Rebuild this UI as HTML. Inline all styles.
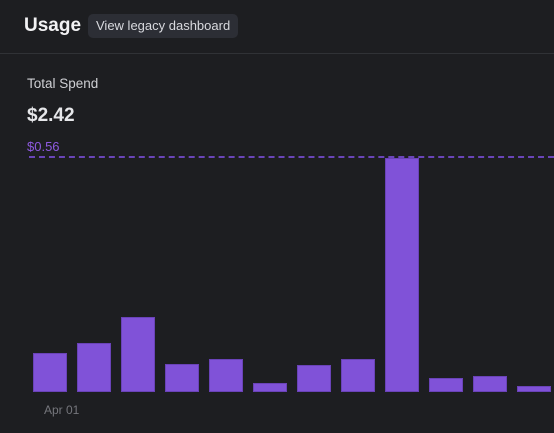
<!DOCTYPE html>
<html><head><style>
body{margin:0;width:554px;height:433px;background:#1d1e21;font-family:"Liberation Sans",sans-serif;overflow:hidden;position:relative}
.h{position:absolute;left:24px;top:15px;color:#f2f2f4;font-size:19px;font-weight:bold}
.b{position:absolute;left:88px;top:14px;height:24px;padding:0 8px;background:#2c2e35;border-radius:5px;color:#d8d9de;font-size:13px;line-height:24px}
.hr{position:absolute;left:0;right:0;top:53px;height:1px;background:#303236}
.t{position:absolute;left:27px;top:76px;color:#cfd0d4;font-size:13.5px}
.v{position:absolute;left:27px;top:105px;color:#e6e7ea;font-size:19px;font-weight:bold}
.p{position:absolute;left:27px;top:139px;color:#8e5ae0;font-size:13px}
.d{position:absolute;left:29px;right:0;top:156px;border-top:2px dashed #6a45b8}
.bar{position:absolute;width:34px;background:#8052d8;bottom:41px;box-shadow:inset 0 0 0 1px #6a43b8}
.x{position:absolute;left:44px;top:403px;color:#75767c;font-size:12px}
</style></head><body>
<div class="h">Usage</div><div class="b">View legacy dashboard</div>
<div class="hr"></div>
<div class="t">Total Spend</div><div class="v">$2.42</div><div class="p">$0.56</div>
<div class="d"></div>
<div class="bar" style="left:33px;height:39px"></div>
<div class="bar" style="left:77px;height:49px"></div>
<div class="bar" style="left:121px;height:75px"></div>
<div class="bar" style="left:165px;height:28px"></div>
<div class="bar" style="left:209px;height:33px"></div>
<div class="bar" style="left:253px;height:9px"></div>
<div class="bar" style="left:297px;height:27px"></div>
<div class="bar" style="left:341px;height:33px"></div>
<div class="bar" style="left:385px;height:234px"></div>
<div class="bar" style="left:429px;height:14px"></div>
<div class="bar" style="left:473px;height:16px"></div>
<div class="bar" style="left:517px;height:6px"></div>
<div class="x">Apr 01</div>
</body></html>
